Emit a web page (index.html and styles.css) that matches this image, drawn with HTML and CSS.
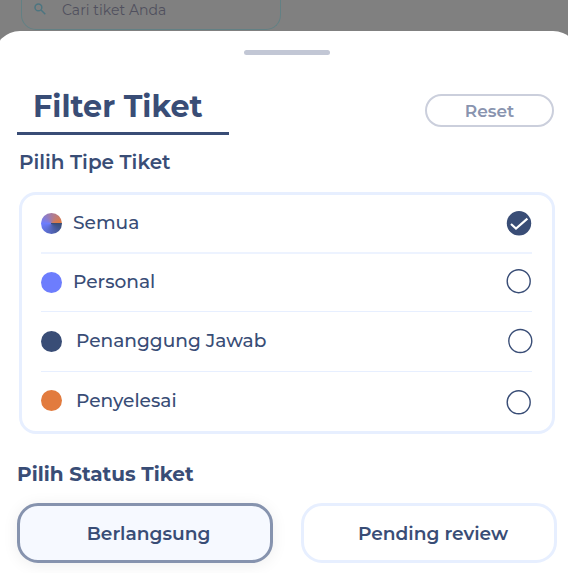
FILE: index.html
```html
<!DOCTYPE html>
<html lang="id">

<head>
	<meta charset="utf-8">
	<title>Filter Tiket</title>
	<link rel="stylesheet" href="styles.css">
</head>

<body>

	<div class="search">
		<svg class="search-icon" viewBox="0 0 12 12">
			<circle cx="4.4" cy="4.4" r="3.4" />
			<path d="M7 7l4.3 4.3" />
		</svg>
		<span class="search-text">Cari tiket Anda</span>
	</div>

	<div class="sheet">
		<div class="handle"></div>

		<div class="header">
			<h1 class="title">Filter Tiket</h1>
			<button class="reset">Reset</button>
		</div>

		<h2 class="type-title">Pilih Tipe Tiket</h2>
		<ul class="types">
			<li>
				<i class="dot all"></i>
				<span class="name">Semua</span>
				<svg class="radio" viewBox="0 0 26 26">
					<circle class="checked" cx="13" cy="13.3" r="12.2" />
					<path d="M5 13.9l5 4.7L21.4 8.6" />
				</svg>
			</li>
			<li>
				<i class="dot personal"></i>
				<span class="name">Personal</span>
				<svg class="radio" viewBox="0 0 26 26">
					<circle cx="12.7" cy="12.2" r="11.5" />
				</svg>
			</li>
			<li>
				<i class="dot owner"></i>
				<span class="name wide">Penanggung Jawab</span>
				<svg class="radio" viewBox="0 0 26 26">
					<circle cx="13.3" cy="13" r="11.5" />
				</svg>
			</li>
			<li>
				<i class="dot solver"></i>
				<span class="name wide">Penyelesai</span>
				<svg class="radio" viewBox="0 0 26 26">
					<circle cx="12.7" cy="14.3" r="11.5" />
				</svg>
			</li>
		</ul>

		<h2 class="status-title">Pilih Status Tiket</h2>
		<div class="status">
			<button class="status-btn active">Berlangsung</button>
			<button class="status-btn pending">Pending review</button>
		</div>
	</div>

</body>

</html>
```
FILE: styles.css
```css
* {
	padding: 0;
	margin: 0;
	box-sizing: border-box;
	list-style: none;
}

body {
	width: 568px;
	height: 573px;
	overflow: hidden;
	background-color: #808080;
	color: #394d76;
	font-family: Montserrat, Inter, "Open Sans", sans-serif;
}

button {
	font-family: inherit;
	color: inherit;
	background-color: #fff;
}

.search {
	display: flex;
	width: 260px;
	height: 30px;
	margin-left: 21px;
	padding-left: 12px;
	border: 1px solid #628084;
	border-top: 0;
	border-radius: 0 0 15px 15px;
}

.search-icon {
	width: 12px;
	height: 12px;
	margin-top: 3px;
	fill: none;
	stroke: #4c7580;
	stroke-width: 1.5;
}

.search-text {
	margin-left: 16px;
	font-size: 14px;
	line-height: 20px;
	color: #50505e;
	letter-spacing: 0.05px;
}

.sheet {
	width: 585px;
	height: 560px;
	margin: 1px 0 0 -6px;
	padding: 19px 22px 0 23px;
	border-radius: 26px 26px 0 0;
	background-color: #fff;
}

.handle {
	width: 86px;
	height: 5px;
	margin-left: 227px;
	border-radius: 3px;
	background-color: #c2c7d5;
}

.header {
	display: flex;
	justify-content: space-between;
	height: 80px;
	padding-right: 3px;
}

.title {
	width: 212px;
	height: 80px;
	padding: 32px 0 0 16px;
	border-bottom: 3px solid #394d76;
	font-size: 30.2px;
	line-height: 40px;
	white-space: nowrap;
}

.reset {
	width: 129px;
	height: 33px;
	margin-top: 39px;
	border: 2px solid #cbcfdc;
	border-radius: 17px;
	font-size: 17px;
	font-weight: 600;
	color: #8994af;
}

h2 {
	font-size: 20px;
	line-height: 26px;
	white-space: nowrap;
}

.type-title {
	margin: 14px 0 0 2px;
	font-weight: 600;
}

.types {
	width: 536px;
	height: 242px;
	margin: 17px 0 0 2px;
	padding: 0 20px 0 19px;
	border: 3px solid #e7efff;
	border-radius: 17px;
}

.types li {
	display: flex;
	align-items: center;
	height: 59px;
	padding-bottom: 1px;
	border-bottom: 2px solid #edf3ff;
}

.types li:nth-child(2) {
	height: 58px;
	border-bottom: 1px solid #e7efff;
}

.types li:nth-child(3) {
	height: 60px;
	padding-bottom: 1px;
	border-bottom: 1px solid #e7efff;
}

.types li:last-child {
	height: 58px;
	border-bottom: 0;
}

.dot {
	width: 21px;
	height: 21px;
	border-radius: 50%;
}

.all {
	background: conic-gradient(from 90deg, #394d76, #6d7dfd 50%, #e27b3e);
}

.personal {
	background-color: #6d7dfd;
}

.owner {
	background-color: #394d76;
}

.solver {
	background-color: #e27b3e;
}

.name {
	margin-left: 11px;
	font-size: 18.6px;
	font-weight: 500;
	line-height: 26px;
}

.wide {
	margin-left: 14px;
}

.radio {
	width: 26px;
	height: 26px;
	margin-left: auto;
	overflow: visible;
	fill: none;
	stroke: #394d76;
	stroke-width: 1.4;
}

.types li:nth-child(3) .radio {
	margin-right: -1px;
}

.radio .checked {
	fill: #394d76;
	stroke: none;
}

.radio path {
	stroke: #fff;
	stroke-width: 2.1;
}

.status-title {
	margin-top: 27px;
	font-weight: 700;
}

.status {
	display: flex;
	gap: 28px;
	margin-top: 16px;
}

.status-btn {
	width: 256px;
	height: 60px;
	padding: 1px 0 0 7px;
	border: 3px solid #e7efff;
	border-radius: 21px;
	font-size: 18.6px;
	font-weight: 600;
}

.status .active {
	border-color: #8693ae;
	background-color: #f6f9ff;
	box-shadow: 0 2px 16px rgba(0, 0, 0, 0.07);
}

.pending {
	padding-left: 8px;
}
```
